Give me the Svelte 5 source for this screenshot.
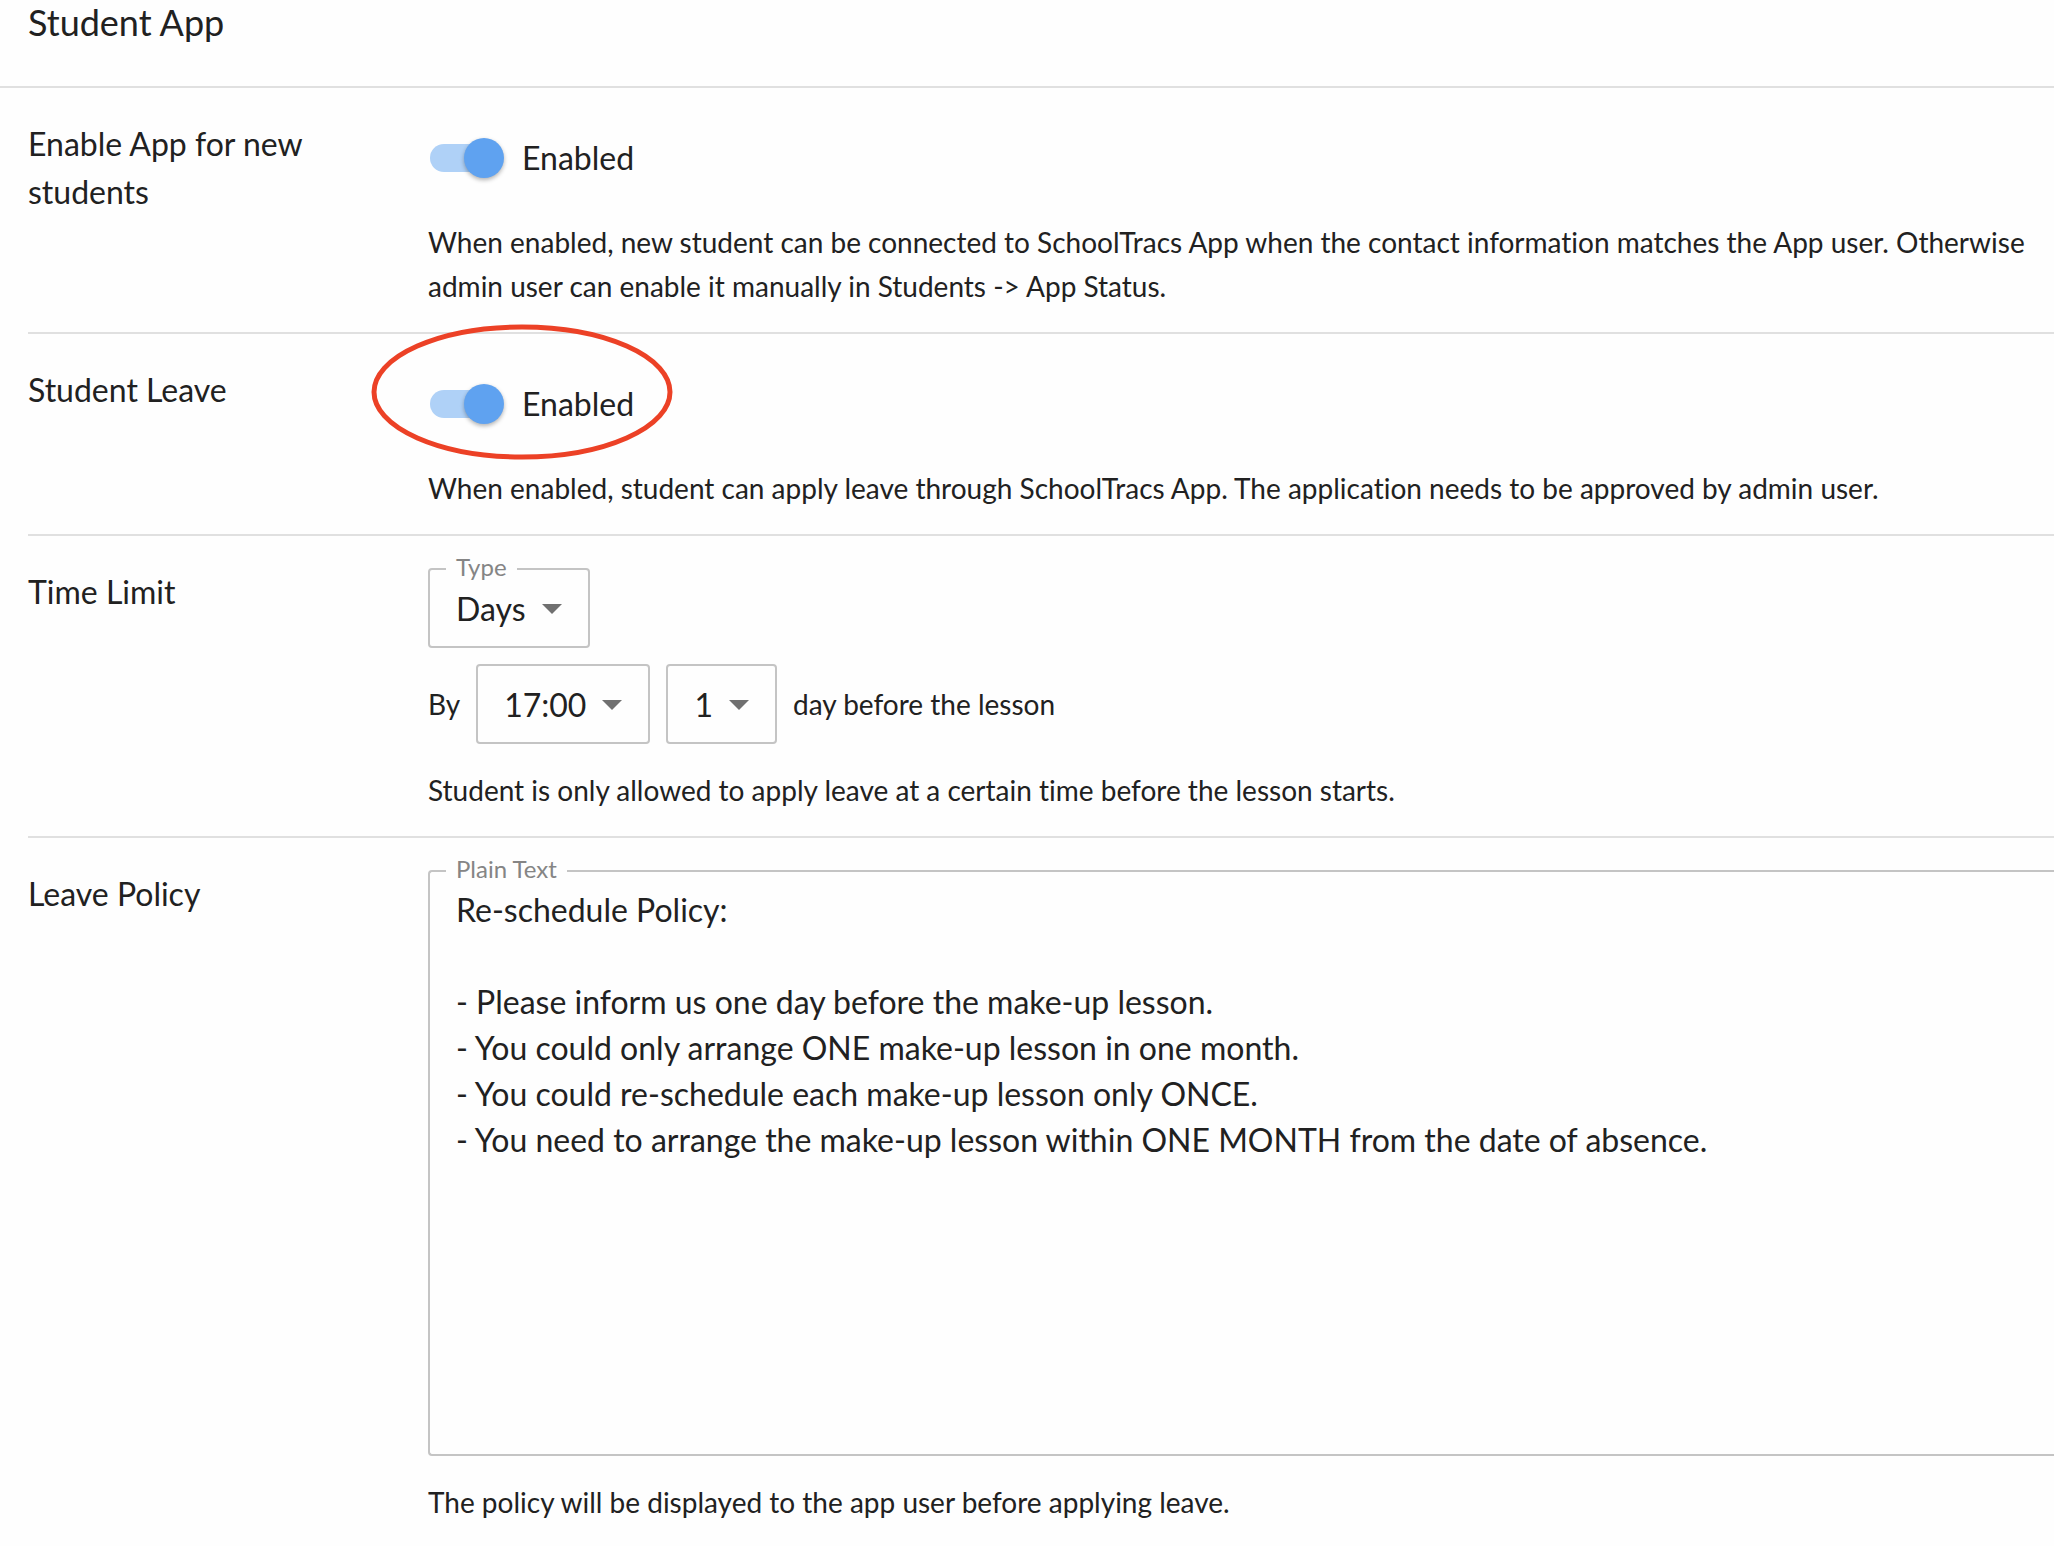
<script>
  let appEnabled = $state(true);
  let leaveEnabled = $state(true);
  let limitType = $state('Days');
  let limitTime = $state('17:00');
  let limitDays = $state('1');
  let policy = $state(
    [
      'Re-schedule Policy:',
      '',
      '- Please inform us one day before the make-up lesson.',
      '- You could only arrange ONE make-up lesson in one month.',
      '- You could re-schedule each make-up lesson only ONCE.',
      '- You need to arrange the make-up lesson within ONE MONTH from the date of absence.'
    ].join('\n')
  );
</script>

{#snippet arrow()}
  <svg class="arrow" viewBox="0 0 20 10" aria-hidden="true"><path d="M0 0h20L10 10z" /></svg>
{/snippet}

<main>
  <header><h1>Student App</h1></header>

  <section class="row">
    <h2>Enable App for new students</h2>
    <div class="content">
      <label class="toggle">
        <input type="checkbox" role="switch" bind:checked={appEnabled} />
        <span>{appEnabled ? 'Enabled' : 'Disabled'}</span>
      </label>
      <p class="hint after-toggle">
        When enabled, new student can be connected to SchoolTracs App when the contact information
        matches the App user. Otherwise admin user can enable it manually in Students -&gt; App Status.
      </p>
    </div>
  </section>

  <section class="row">
    <h2>Student Leave</h2>
    <div class="content">
      <label class="toggle">
        <input type="checkbox" role="switch" bind:checked={leaveEnabled} />
        <span>{leaveEnabled ? 'Enabled' : 'Disabled'}</span>
        <svg class="ring" viewBox="0 0 302 136" aria-hidden="true">
          <ellipse cx="151" cy="68" rx="148" ry="65" />
        </svg>
      </label>
      <p class="hint after-toggle">
        When enabled, student can apply leave through SchoolTracs App. The application needs to be
        approved by admin user.
      </p>
    </div>
  </section>

  <section class="row">
    <h2>Time Limit</h2>
    <div class="content">
      <fieldset class="outlined type">
        <legend><label for="limit-type">Type</label></legend>
        <div class="select">
          <select id="limit-type" bind:value={limitType}>
            <option>Days</option>
            <option>Hours</option>
          </select>
          {@render arrow()}
        </div>
      </fieldset>
      <div class="deadline">
        <label for="limit-time">By</label>
        <div class="select boxed">
          <select id="limit-time" bind:value={limitTime}>
            <option>17:00</option>
            <option>18:00</option>
          </select>
          {@render arrow()}
        </div>
        <div class="select boxed">
          <select id="limit-days" bind:value={limitDays}>
            <option>1</option>
            <option>2</option>
          </select>
          {@render arrow()}
        </div>
        <label for="limit-days">day before the lesson</label>
      </div>
      <p class="hint">Student is only allowed to apply leave at a certain time before the lesson starts.</p>
    </div>
  </section>

  <section class="row last">
    <h2>Leave Policy</h2>
    <div class="content">
      <fieldset class="outlined policy">
        <legend><label for="policy">Plain Text</label></legend>
        <textarea id="policy" rows="12" spellcheck="false" bind:value={policy}></textarea>
      </fieldset>
      <p class="hint">The policy will be displayed to the app user before applying leave.</p>
    </div>
  </section>
</main>

<style>
  :global(body) {
    margin: 0;
    background: #fefefe;
  }
  main {
    font-family: Lato, 'Liberation Sans', sans-serif;
    font-size: 28px;
    font-variant-ligatures: none;
    line-height: 44px;
    color: #212121;
    overflow-x: hidden;
  }
  header {
    padding: 0 28px 42px;
    border-bottom: 2px solid #e0e0e0;
  }
  h1,
  h2,
  p {
    margin: 0;
    font-weight: 400;
  }
  h1 {
    font-size: 36px;
    line-height: 44px;
  }
  .row {
    display: grid;
    grid-template-columns: 400px minmax(0, 1fr);
    margin-left: 28px;
    border-bottom: 2px solid #e0e0e0;
  }
  .row.last {
    border-bottom: 0;
  }
  h2 {
    padding: 32px 24px 0 0;
    font-size: 32px;
    line-height: 48px;
  }
  .content {
    padding: 24px 0;
  }
  .last .content {
    padding-bottom: 0;
  }
  .hint {
    margin-top: 24px;
    padding-right: 28px;
  }
  .after-toggle {
    margin-top: 16px;
  }

  .toggle {
    position: relative;
    display: flex;
    width: fit-content;
    align-items: center;
    gap: 18px;
    height: 92px;
    margin-left: 2px;
    font-size: 32px;
  }
  .toggle input {
    appearance: none;
    display: grid;
    align-items: center;
    width: 74px;
    height: 40px;
    margin: 0;
    cursor: pointer;
  }
  .toggle input::before,
  .toggle input::after {
    content: '';
    grid-area: 1 / 1;
  }
  .toggle input::before {
    width: 64px;
    height: 28px;
    border-radius: 14px;
    background: #bdbdbd;
  }
  .toggle input::after {
    width: 40px;
    height: 40px;
    border-radius: 50%;
    background: #fafafa;
    box-shadow: 0 2px 4px rgba(0, 0, 0, 0.3);
  }
  .toggle input:checked::before {
    background: #afd1f7;
  }
  .toggle input:checked::after {
    justify-self: end;
    background: #5fa2f0;
  }
  .ring {
    position: absolute;
    left: -59px;
    top: -34px;
    width: 302px;
    height: 136px;
    pointer-events: none;
  }
  .ring ellipse {
    fill: none;
    stroke: #ec4126;
    stroke-width: 5;
  }

  .outlined {
    min-width: 0;
    margin: 0;
    padding: 0;
    border: 2px solid #c4c4c4;
    border-radius: 4px;
  }
  legend {
    margin-left: 16px;
    padding: 0 10px 4px;
    font-size: 24px;
    line-height: 14px;
    color: #858585;
  }
  .type {
    width: fit-content;
  }
  .type .select {
    padding: 7px 0 13px;
  }
  .select {
    display: grid;
    align-items: center;
  }
  .select > :global(*) {
    grid-area: 1 / 1;
  }
  select {
    appearance: none;
    field-sizing: content;
    height: 48px;
    margin: 0;
    padding: 0 62px 0 26px;
    border: 0;
    outline: 0;
    background: transparent;
    font: inherit;
    font-size: 32px;
    line-height: 48px;
    color: inherit;
  }
  .arrow {
    justify-self: end;
    width: 20px;
    height: 10px;
    margin-right: 26px;
    fill: #707070;
    pointer-events: none;
  }
  .boxed {
    height: 74px;
    padding-top: 2px;
    border: 2px solid #c4c4c4;
    border-radius: 4px;
  }
  .deadline {
    display: flex;
    align-items: center;
    gap: 16px;
    margin-top: 16px;
  }

  .policy {
    border-right: 0;
    border-radius: 4px 0 0 4px;
  }
  textarea {
    display: block;
    box-sizing: border-box;
    width: 100%;
    margin: 0;
    padding: 7px 26px 15px;
    border: 0;
    outline: 0;
    resize: none;
    overflow: hidden;
    background: transparent;
    font: inherit;
    font-size: 32px;
    font-variant-ligatures: none;
    line-height: 46px;
    color: inherit;
  }
</style>
